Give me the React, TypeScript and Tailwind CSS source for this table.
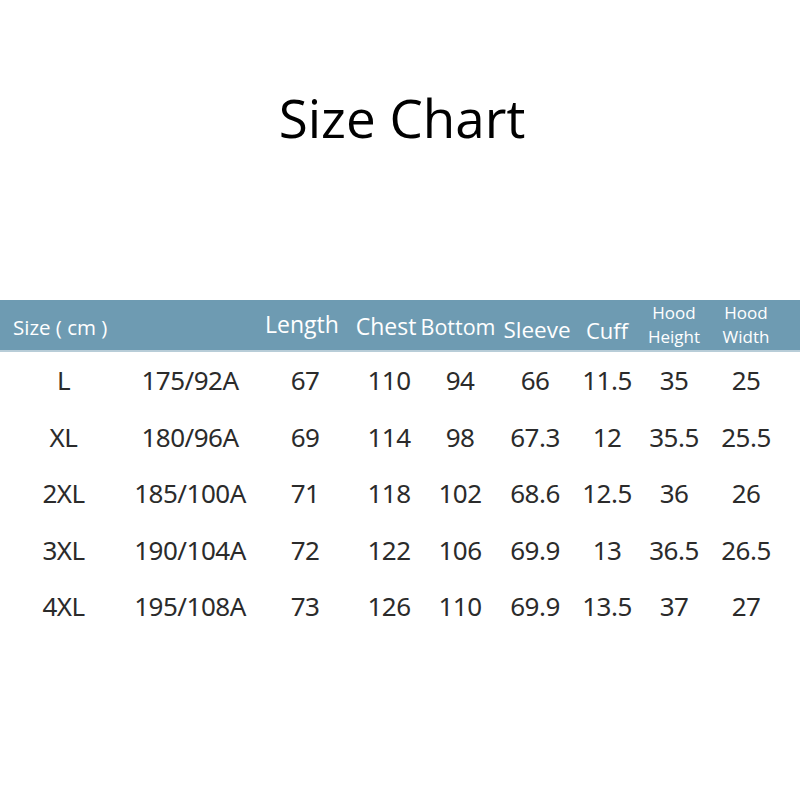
import React from "react";

const rows = [
  ["L", "175/92A", "67", "110", "94", "66", "11.5", "35", "25"],
  ["XL", "180/96A", "69", "114", "98", "67.3", "12", "35.5", "25.5"],
  ["2XL", "185/100A", "71", "118", "102", "68.6", "12.5", "36", "26"],
  ["3XL", "190/104A", "72", "122", "106", "69.9", "13", "36.5", "26.5"],
  ["4XL", "195/108A", "73", "126", "110", "69.9", "13.5", "37", "27"],
];

const grid =
  "grid grid-cols-[127px_126px_104px_64px_78px_72px_72px_62px_82px]";

export default function App() {
  return (
    <div
      className="w-[800px] h-[800px] bg-white overflow-hidden"
      style={{ fontFamily: '"Noto Sans", sans-serif' }}
    >
      <div className="pt-[91px] pl-[4px] h-[300px]">
        <h1
          className="text-center text-[53px] leading-[53px] text-black"
          style={{ fontFamily: '"Open Sans", sans-serif' }}
        >
          Size Chart
        </h1>
      </div>
      <div
        className={`${grid} h-[52px] bg-[#6e9bb2] border-b-2 border-[#b8cdd8] text-white items-end`}
        style={{ fontFamily: '"Open Sans", sans-serif' }}
      >
        <div className="col-span-2 pl-[13px] pb-[11px] text-[20.5px] leading-[24px] whitespace-nowrap">
          Size ( cm )
        </div>
        <div className="text-center pb-[12px] text-[23px] leading-[28px] -translate-x-[3px] whitespace-nowrap">
          Length
        </div>
        <div className="text-center pb-[10px] text-[23px] leading-[28px] -translate-x-[3px] whitespace-nowrap">
          Chest
        </div>
        <div className="text-center pb-[10px] text-[21.5px] leading-[26px] -translate-x-[2px] whitespace-nowrap">
          Bottom
        </div>
        <div className="text-center pb-[7px] text-[22.5px] leading-[27px] translate-x-[2px] whitespace-nowrap">
          Sleeve
        </div>
        <div className="text-center pb-[7px] text-[22px] leading-[26px]">
          Cuff
        </div>
        <div className="flex flex-col items-center pb-[2px] text-[17px] leading-[23.5px]">
          <span>Hood</span>
          <span>Height</span>
        </div>
        <div className="flex flex-col items-center pb-[2px] text-[17px] leading-[23.5px]">
          <span>Hood</span>
          <span>Width</span>
        </div>
      </div>
      <div className="text-[#2b2b2b]">
        {rows.map((r, i) => (
          <div key={i} className={`${grid} h-[56.5px] items-center`}>
            {r.map((c, j) => (
              <div
                key={j}
                className="text-center text-[26px] leading-[30px] tracking-[-0.5px] whitespace-nowrap"
              >
                {c}
              </div>
            ))}
          </div>
        ))}
      </div>
    </div>
  );
}
